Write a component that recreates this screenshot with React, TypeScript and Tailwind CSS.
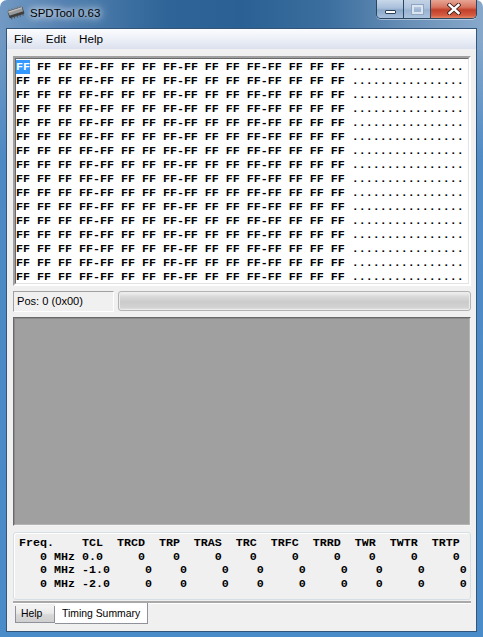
import React from "react";

const HEX_LINE = "FF FF FF FF-FF FF FF FF-FF FF FF FF-FF FF FF FF ................";
const TIMING_SUFFIX = "     0    0     0    0     0     0    0     0     0";
const timingRows = [
  "Freq.    TCL  TRCD  TRP  TRAS  TRC  TRFC  TRRD  TWR  TWTR  TRTP",
  "   0 MHz 0.0" + TIMING_SUFFIX,
  "   0 MHz -1.0" + TIMING_SUFFIX,
  "   0 MHz -2.0" + TIMING_SUFFIX,
];

const ChipIcon = () => (
  <svg width="18" height="15" viewBox="0 0 18 15">
    <g transform="rotate(-18 9 7.5)">
      {[3, 6, 9, 12, 15].map((x) => (
        <g key={x}>
          <rect x={x - 0.6} y="2.2" width="1.2" height="2" fill="#7a7a7a" />
          <rect x={x - 0.6} y="10.8" width="1.2" height="2" fill="#5a5a5a" />
        </g>
      ))}
      <rect x="1.2" y="3.8" width="15.6" height="7.4" rx="1" fill="#3d3d3d" />
      <rect x="1.8" y="4.2" width="14.4" height="4.3" rx="0.6" fill="#9a9a9a" />
      <rect x="1.8" y="4.2" width="14.4" height="1.3" fill="#c4c4c4" />
    </g>
  </svg>
);

const CaptionButtons = () => (
  <div className="flex h-[19px] rounded-b-[5px] overflow-hidden border border-t-0 border-[#2c4560] shadow-[0_1px_0_rgba(255,255,255,0.45)]">
    <div className="w-[27px] h-full flex items-end justify-center pb-[4px] border-r border-[#2c4560] bg-[linear-gradient(180deg,#c9d8ea_0%,#a8bfda_45%,#8ba8c9_55%,#a6bfdc_100%)]">
      <div className="w-[11px] h-[4px] bg-white border border-[#2d3f55] rounded-[1px]" />
    </div>
    <div className="w-[27px] h-full flex items-center justify-center border-r border-[#2c4560] bg-[linear-gradient(180deg,#c4d3e6_0%,#aec3dc_45%,#98b2d0_55%,#acc3de_100%)]">
      <div className="w-[11px] h-[9px] border-2 border-[#dbe4ef] shadow-[0_0_0_1px_#8ea6c2]" />
    </div>
    <div className="w-[45px] h-full flex items-center justify-center bg-[linear-gradient(180deg,#e8a595_0%,#d87560_40%,#c2402a_55%,#d45a3f_85%,#e08868_100%)]">
      <svg width="14" height="12" viewBox="0 0 14 12">
        <path d="M2.5 2 L11.5 10 M11.5 2 L2.5 10" stroke="#3a1d18" strokeWidth="4.2" strokeLinecap="square" />
        <path d="M2.5 2 L11.5 10 M11.5 2 L2.5 10" stroke="#ffffff" strokeWidth="2.4" strokeLinecap="square" />
      </svg>
    </div>
  </div>
);

export default function App() {
  return (
    <div className="w-[483px] h-[637px] bg-white">
      <div className="w-full h-full rounded-t-[7px] px-[6px] pb-[5px] flex flex-col font-['Liberation_Sans',Arial,sans-serif] bg-[linear-gradient(180deg,rgba(70,134,196,0)_0px,rgba(70,134,196,0)_40px,rgba(70,134,196,0.85)_160px,#4a8bc9_100%),linear-gradient(90deg,#7199c3_0%,#5683b3_12%,#2e6497_35%,#2a6094_50%,#3c6f9f_68%,#6a90b8_85%,#87a8cb_100%)]">
        {/* title bar */}
        <div className="h-[28px] flex items-start">
          <div className="flex items-center pt-[5px] pl-[1px] gap-[5px]">
            <ChipIcon />
            <span className="text-[11.5px] text-black leading-[14px] [text-shadow:0_0_6px_#ffffff,0_0_10px_rgba(255,255,255,0.8),0_0_14px_rgba(255,255,255,0.6)]">
              SPDTool 0.63
            </span>
          </div>
          <div className="flex-1" />
          <CaptionButtons />
        </div>

        {/* client area */}
        <div className="flex-1 flex flex-col border border-[#34557a] bg-[#f0f0f0]">
          <div className="h-[20px] flex items-center gap-[13px] pl-[7px] text-[11.7px] text-black bg-[linear-gradient(180deg,#fbfcfe_0%,#eef1f8_45%,#dbe1ee_100%)]">
            <span>File</span>
            <span>Edit</span>
            <span>Help</span>
          </div>

          {/* hex view */}
          <div className="mt-[7px] ml-[6px] mr-[5px] h-[230px] border-2 border-t-[#a0a0a0] border-l-[#a0a0a0] border-r-[#ffffff] border-b-[#ffffff]">
            <div className="h-full border border-t-[#696969] border-l-[#696969] border-r-[#e3e3e3] border-b-[#e3e3e3] bg-white pl-[0px] pt-[1px] overflow-hidden whitespace-pre font-['Liberation_Mono','Courier_New',monospace] font-bold text-[11.67px] leading-[14px] text-black">
              {Array.from({ length: 16 }).map((_, i) =>
                i === 0 ? (
                  <div key={i}>
                    <span className="bg-[#3399ff] text-white">FF</span>
                    {HEX_LINE.slice(2)}
                  </div>
                ) : (
                  <div key={i}>{HEX_LINE}</div>
                )
              )}
            </div>
          </div>

          {/* position + progress */}
          <div className="mt-[5px] ml-[6px] mr-[5px] h-[21px] flex gap-[4px]">
            <div className="w-[101px] h-full flex items-center pl-[3px] text-[11.1px] text-black border border-t-[#a0a0a0] border-l-[#a0a0a0] border-r-[#ffffff] border-b-[#ffffff]">
              Pos: 0 (0x00)
            </div>
            <div className="flex-1 h-[20px] rounded-[3px] border border-[#b3b3b3] shadow-[inset_0_0_0_1px_#ececec] bg-[linear-gradient(180deg,#f3f3f3_0%,#dadada_25%,#cbcbcb_55%,#d2d2d2_85%,#e4e4e4_100%)]" />
          </div>

          {/* gray panel */}
          <div className="mt-[5px] ml-[6px] mr-[5px] h-[209px] border border-t-[#696969] border-l-[#696969] border-r-[#f4f4f4] border-b-[#f4f4f4]">
            <div className="h-full bg-[#a0a0a0] border border-t-[#8a8a8a] border-l-[#8a8a8a] border-r-[#b4b4b4] border-b-[#b4b4b4]" />
          </div>

          {/* timing summary */}
          <div className="mt-[6px] ml-[6px] mr-[5px] h-[68px] rounded-[3px] border border-[#d5dfe5] shadow-[inset_1px_1px_0_#ffffff] pl-[5px] pt-[4px] whitespace-pre font-['Liberation_Mono','Courier_New',monospace] font-bold text-[11.67px] leading-[13.7px] text-black">
            {timingRows.map((row, i) => (
              <div key={i}>{row}</div>
            ))}
          </div>

          {/* tabs */}
          <div className="mt-[1px] ml-[6px] mr-[5px] h-[2px] bg-[#a9a9a9] shadow-[0_1px_0_#ffffff]" />
          <div className="ml-[8px] flex items-start text-[10.4px] text-black">
            <div className="mt-[3px] w-[40px] h-[17px] pl-[5px] flex items-center border border-t-0 border-[#8f929b] bg-[linear-gradient(180deg,#f4f4f4_0%,#e8e8e8_45%,#d8d8d8_55%,#cfcfcf_100%)]">
              Help
            </div>
            <div className="w-[93px] h-[21px] pl-[7px] pt-[2px] flex items-center bg-white border-r border-b border-[#8f929b] border-l-0">
              Timing Summary
            </div>
          </div>
        </div>
      </div>
    </div>
  );
}
